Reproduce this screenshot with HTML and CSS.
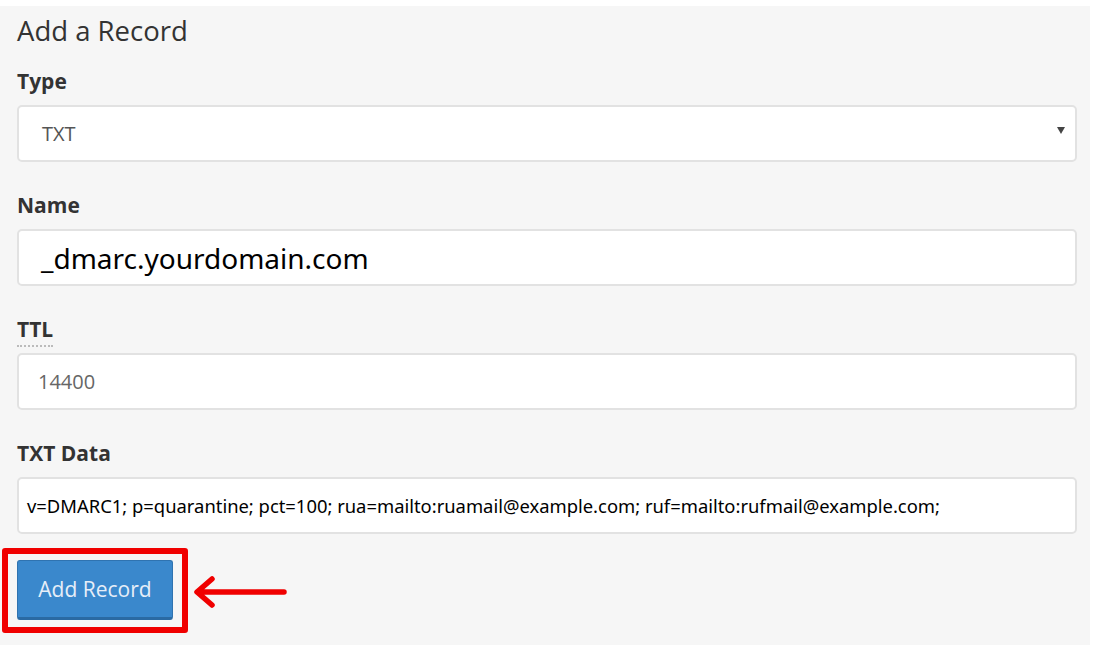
FILE: index.html
```html
<!DOCTYPE html>
<html lang="en">
<head>
  <meta charset="UTF-8" />
  <title>Add a Record</title>
  <link rel="stylesheet" href="styles.css">
</head>
<body>

<div class="panel">
  <h1 class="panel-title">Add a Record</h1>

  <div class="field">
    <label class="field-label">Type</label>
    <div class="select-box">
      <span class="select-value">TXT</span>
      <span class="select-caret"></span>
    </div>
  </div>

  <div class="field">
    <label class="field-label">Name</label>
    <div class="input-box name-input">_dmarc.yourdomain.com</div>
  </div>

  <div class="field">
    <label class="field-label"><abbr class="hint">TTL</abbr></label>
    <div class="input-box ttl-input">14400</div>
  </div>

  <div class="field">
    <label class="field-label">TXT Data</label>
    <div class="input-box data-input">v=DMARC1; p=quarantine; pct=100; rua=mailto:ruamail@example.com; ruf=mailto:rufmail@example.com;</div>
  </div>

  <div class="actions">
    <div class="highlight">
      <button class="add-btn">Add Record</button>
    </div>
    <svg class="arrow" width="96" height="34" viewBox="0 0 96 34">
      <path d="M92 17 H6 M20 4 L5 17 L20 30" fill="none" stroke="#f00000" stroke-width="5.5" stroke-linecap="round" stroke-linejoin="round"/>
    </svg>
  </div>
</div>

</body>
</html>
```

FILE: styles.css
```css
html, body {
  margin: 0; padding: 0;
  background: #fff;
  font-family: 'Open Sans', sans-serif;
}

.panel {
  margin: 6px 5px 0 0;
  height: 639px;
  box-sizing: border-box;
  padding: 5px 13px 0 17px;
  background: #f6f6f6;
}

.panel-title {
  margin: 0 0 18px;
  font-size: 27.5px; font-weight: 400;
  line-height: 40px;
  color: #333;
}

.field { margin-bottom: 31px; }

.field-label {
  display: block;
  font-size: 21px; font-weight: 700;
  line-height: 24px;
  color: #333;
  margin-bottom: 12px;
}

.hint {
  text-decoration: none;
  border-bottom: 2px dotted #bbb;
  padding-bottom: 2px;
}

.select-box, .input-box {
  height: 57px; box-sizing: border-box;
  background: #fff;
  border: 2px solid #e2e2e2;
  border-radius: 5px;
  display: flex; align-items: center;
}

.select-box { justify-content: space-between; padding: 0 10px 0 23px; }
.select-value { font-size: 20px; color: #555; }
.select-caret {
  width: 0; height: 0;
  border-left: 4px solid transparent;
  border-right: 4px solid transparent;
  border-top: 7px solid #444;
  margin-top: -6px;
}

.name-input {
  padding-left: 22px;
  font-family: 'Noto Sans', sans-serif;
  font-size: 28px; color: #000;
}
.ttl-input { padding-left: 19px; font-size: 20px; color: #666; }
.data-input {
  padding-left: 8px;
  font-family: 'Noto Sans', sans-serif;
  font-size: 18.4px; color: #000;
  white-space: nowrap; overflow: hidden;
}

.actions {
  display: flex; align-items: center;
  margin-top: -17px;
  margin-left: -15px;
}

.highlight {
  border: 6px solid #f00000;
  border-radius: 3px;
  padding: 6px 9px 7px 9px;
}

.add-btn {
  display: block;
  width: 156px; height: 60px;
  background: #3a88cc;
  border: 1px solid #2f73b0;
  border-bottom: 3px solid #2a6aa3;
  border-radius: 3px;
  color: #e6eef8;
  font-family: 'Open Sans', sans-serif;
  font-size: 21px;
  cursor: pointer;
}

.arrow { margin-left: 4px; margin-top: 2px; }
```
